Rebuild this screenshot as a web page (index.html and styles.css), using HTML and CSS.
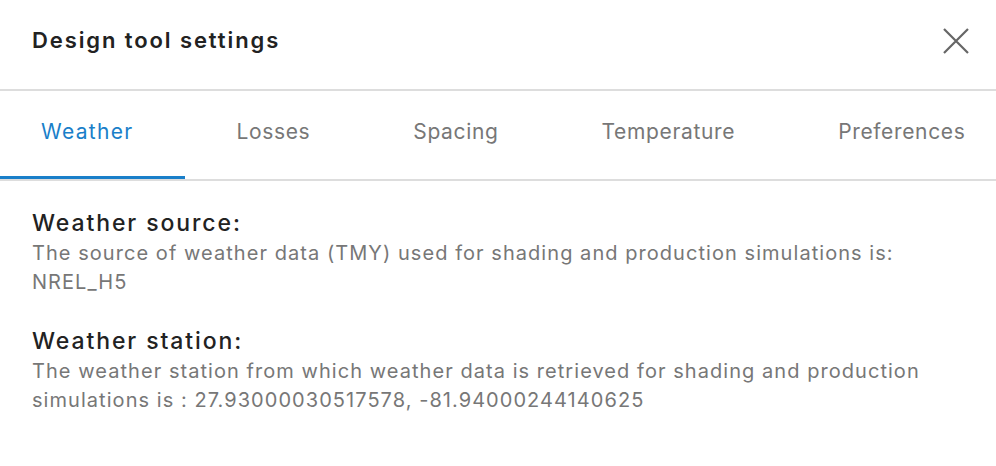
FILE: index.html
```html
<!DOCTYPE html>
<html lang="en">
<head>
  <meta charset="UTF-8">
  <title>Design tool settings</title>
  <link rel="stylesheet" href="styles.css">
</head>
<body>
  <div id="dialog">
    <div id="header">
      <div id="title">Design tool settings</div>
      <button id="closeButton" aria-label="Close">
        <svg width="26" height="26" viewBox="0 0 26 26">
          <path d="M1 1 L25 25 M25 1 L1 25" stroke="#666" stroke-width="2.2" fill="none"/>
        </svg>
      </button>
    </div>
    <div id="tabs">
      <div class="tab active">Weather</div>
      <div class="tab">Losses</div>
      <div class="tab">Spacing</div>
      <div class="tab">Temperature</div>
      <div class="tab">Preferences</div>
    </div>
    <div id="content">
      <div class="section">
        <div class="sectionTitle">Weather source:</div>
        <div class="sectionText">The source of weather data (TMY) used for shading and production simulations is:<br>NREL_H5</div>
      </div>
      <div class="section">
        <div class="sectionTitle">Weather station:</div>
        <div class="sectionText">The weather station from which weather data is retrieved for shading and production simulations is : 27.93000030517578, -81.94000244140625</div>
      </div>
    </div>
  </div>
</body>
</html>
```

FILE: styles.css
```css
body {
  margin: 0;
  background: #fff;
  font-family: Inter, "Noto Sans", sans-serif;
  overflow: hidden;
}
#dialog {
  width: 996px;
  height: 466px;
  background: #fff;
}
#header {
  display: flex;
  align-items: center;
  justify-content: space-between;
  height: 91px;
  padding: 0 27px 0 32px;
  border-bottom: 2px solid #ddd;
  box-sizing: border-box;
}
#title {
  font-size: 22px;
  font-weight: 600;
  letter-spacing: 1.9px;
  color: #222;
  margin-bottom: 9px;
}
#closeButton {
  background: none;
  border: none;
  padding: 0;
  margin-bottom: 7px;
  display: flex;
  cursor: pointer;
}
#tabs {
  display: flex;
  height: 90px;
  border-bottom: 2px solid #ddd;
  box-sizing: border-box;
  white-space: nowrap;
  overflow: hidden;
}
.tab {
  display: flex;
  align-items: center;
  padding: 0 51.5px 5px;
  font-size: 21px;
  letter-spacing: 0.65px;
  color: #777;
  margin-bottom: -2px;
  border-bottom: 5px solid transparent;
}
.tab:first-child {
  padding-left: 41px;
  letter-spacing: 1.3px;
}
.tab.active {
  color: #1a7fc9;
  border-bottom-color: #1a7fc9;
}
#content {
  padding: 26px 32px;
}
.section {
  margin-bottom: 28px;
}
.sectionTitle {
  font-size: 23px;
  font-weight: 500;
  letter-spacing: 1.9px;
  color: #222;
  line-height: 32px;
}
.sectionText {
  font-size: 20px;
  letter-spacing: 1.05px;
  color: #777;
  line-height: 29px;
  max-width: 910px;
}
```
